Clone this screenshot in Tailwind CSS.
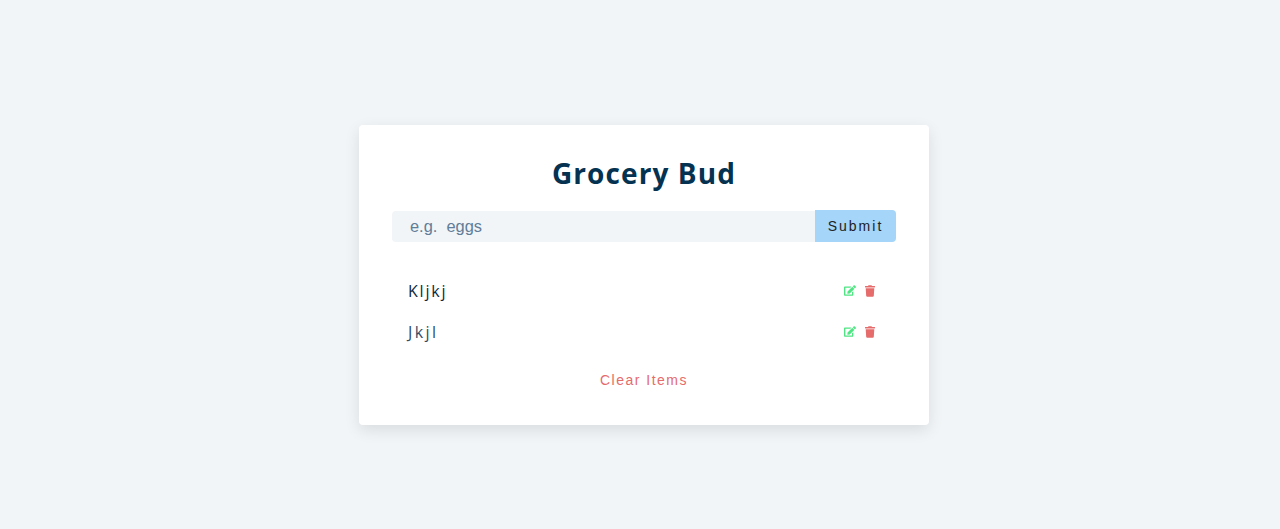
<!doctype html>
<html>
<head>
  <meta charset="UTF-8">
  <meta name="viewport" content="width=device-width, initial-scale=1.0">
  <script src="https://cdn.jsdelivr.net/npm/@tailwindcss/browser@4"></script>
</head>
<body class="bg-[#f1f5f8] h-[529px] overflow-hidden flex justify-center items-start pt-[125px] pl-[8px] font-['Open_Sans',sans-serif]">
  <section class="w-[570px] h-[300px] bg-white rounded-[4px] shadow-[0_5px_15px_rgba(0,0,0,0.1)] px-[33px] pt-[31px]">
    <h3 class="text-center text-[28px] leading-[35px] font-bold tracking-[1.1px] text-[#063251]">Grocery Bud</h3>

    <form class="flex items-center mt-[19px] h-[32px]">
      <div class="flex-1 h-[31px] bg-[#f1f5f8] rounded-l-[4px] pl-[18px] flex items-center text-[16.4px] text-[#617d98] font-['Liberation_Sans',sans-serif] whitespace-pre">e.g.  eggs</div>
      <button type="button" class="w-[81px] h-[32px] bg-[#a5d5f8] rounded-r-[4px] text-[14px] tracking-[2px] text-[#222] font-['Liberation_Sans',sans-serif]">Submit</button>
    </form>

    <div class="mt-[28px]">
      <div class="h-[41px] flex items-center justify-between pl-[16px] pr-[21px]">
        <p class="text-[16px] tracking-[1.8px] text-[#102a42]">Kljkj</p>
        <div class="flex items-center gap-[9px]">
          <svg class="w-[12px] h-[11px]" viewBox="0 0 576 512" fill="#4fe583"><path d="M402.6 83.2l90.2 90.2c3.8 3.8 3.8 10 0 13.8L274.4 405.6l-92.8 10.3c-12.4 1.4-22.9-9.1-21.5-21.5l10.3-92.8L388.8 83.2c3.8-3.8 10-3.8 13.8 0zm162-22.9l-48.8-48.8c-15.2-15.2-39.9-15.2-55.2 0l-35.4 35.4c-3.8 3.8-3.8 10 0 13.8l90.2 90.2c3.8 3.8 10 3.8 13.8 0l35.4-35.4c15.2-15.3 15.2-40 0-55.2zM384 346.2V448H64V128h229.8c3.2 0 6.2-1.3 8.5-3.5l40-40c7.6-7.6 2.2-20.5-8.5-20.5H48C21.5 64 0 85.5 0 112v352c0 26.5 21.5 48 48 48h352c26.5 0 48-21.5 48-48V306.2c0-10.7-12.9-16-20.5-8.5l-40 40c-2.2 2.3-3.5 5.3-3.5 8.5z"/></svg>
          <svg class="w-[10px] h-[12px]" viewBox="0 0 448 512" fill="#e66b6b"><path d="M432 32H312l-9.4-18.7A24 24 0 0 0 281.1 0H166.8a23.72 23.72 0 0 0-21.4 13.3L136 32H16A16 16 0 0 0 0 48v32a16 16 0 0 0 16 16h416a16 16 0 0 0 16-16V48a16 16 0 0 0-16-16zM53.2 467a48 48 0 0 0 47.9 45h245.8a48 48 0 0 0 47.9-45L416 128H32z"/></svg>
        </div>
      </div>
      <div class="h-[41px] flex items-center justify-between pl-[16px] pr-[21px]">
        <p class="text-[16px] tracking-[2.4px] text-[#324d67]">Jkjl</p>
        <div class="flex items-center gap-[9px]">
          <svg class="w-[12px] h-[11px]" viewBox="0 0 576 512" fill="#4fe583"><path d="M402.6 83.2l90.2 90.2c3.8 3.8 3.8 10 0 13.8L274.4 405.6l-92.8 10.3c-12.4 1.4-22.9-9.1-21.5-21.5l10.3-92.8L388.8 83.2c3.8-3.8 10-3.8 13.8 0zm162-22.9l-48.8-48.8c-15.2-15.2-39.9-15.2-55.2 0l-35.4 35.4c-3.8 3.8-3.8 10 0 13.8l90.2 90.2c3.8 3.8 10 3.8 13.8 0l35.4-35.4c15.2-15.3 15.2-40 0-55.2zM384 346.2V448H64V128h229.8c3.2 0 6.2-1.3 8.5-3.5l40-40c7.6-7.6 2.2-20.5-8.5-20.5H48C21.5 64 0 85.5 0 112v352c0 26.5 21.5 48 48 48h352c26.5 0 48-21.5 48-48V306.2c0-10.7-12.9-16-20.5-8.5l-40 40c-2.2 2.3-3.5 5.3-3.5 8.5z"/></svg>
          <svg class="w-[10px] h-[12px]" viewBox="0 0 448 512" fill="#e66b6b"><path d="M432 32H312l-9.4-18.7A24 24 0 0 0 281.1 0H166.8a23.72 23.72 0 0 0-21.4 13.3L136 32H16A16 16 0 0 0 0 48v32a16 16 0 0 0 16 16h416a16 16 0 0 0 16-16V48a16 16 0 0 0-16-16zM53.2 467a48 48 0 0 0 47.9 45h245.8a48 48 0 0 0 47.9-45L416 128H32z"/></svg>
        </div>
      </div>
    </div>

    <button type="button" class="block mx-auto mt-[18px] text-[14px] tracking-[1.5px] text-[#e66b6b] font-['Liberation_Sans',sans-serif]">Clear Items</button>
  </section>
</body>
</html>
